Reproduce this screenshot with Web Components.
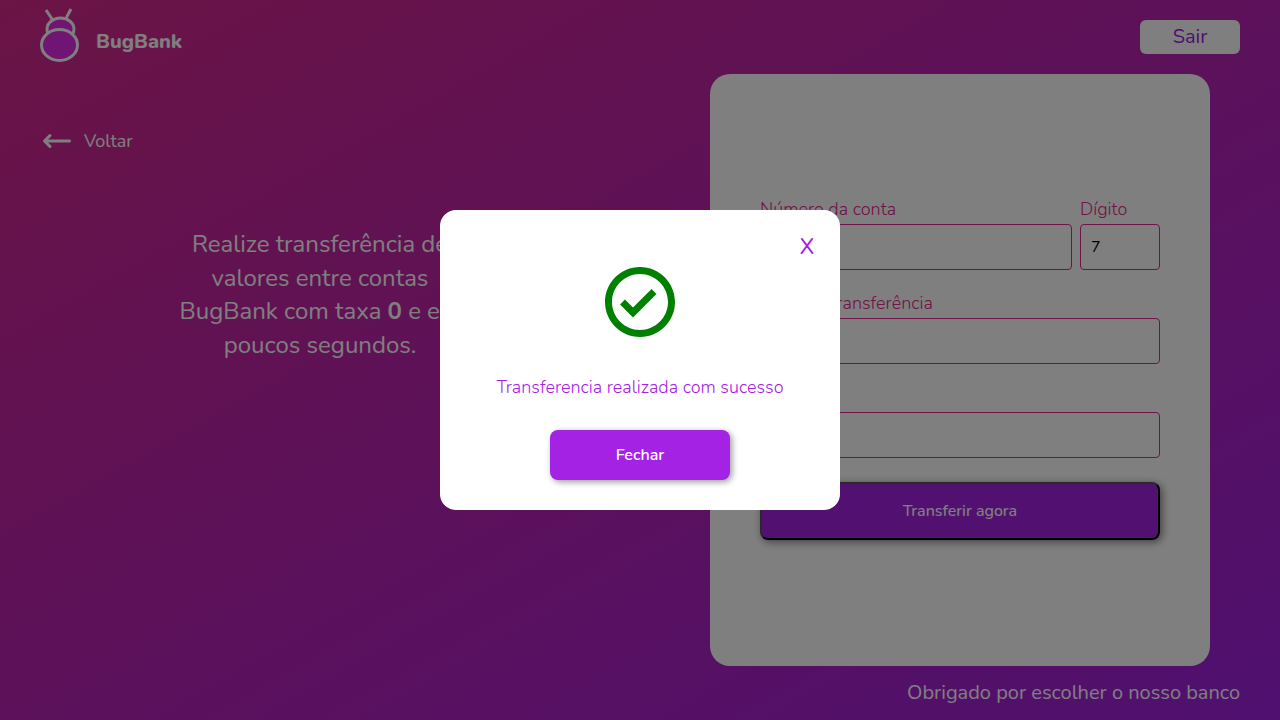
<!DOCTYPE html>
<html lang="pt-BR">
<head>
<meta charset="utf-8">
<meta name="viewport" content="width=device-width, initial-scale=1">
<title>BugBank</title>
<style>
  body { margin: 0; font-family: Nunito, Lato, sans-serif; }
</style>
</head>
<body>
<bug-page>
  <bug-header slot="header"></bug-header>
  <bug-intro slot="intro">Realize transferência de valores entre contas BugBank com taxa <b>0</b> e em poucos segundos.</bug-intro>
  <bug-transfer slot="form"></bug-transfer>
  <span slot="footer">Obrigado por escolher o nosso banco</span>
</bug-page>
<bug-modal>Transferencia realizada com sucesso</bug-modal>

<script>
const define = (name, html) => {
  const template = document.createElement('template');
  template.innerHTML = '<style>*{box-sizing:border-box}</style>' + html;
  customElements.define(name, class extends HTMLElement {
    constructor() {
      super();
      this.attachShadow({ mode: 'open' }).append(template.content.cloneNode(true));
    }
  });
};

define('bug-page', `
<style>
  :host { display: flex; flex-direction: column; min-height: 100vh; box-sizing: border-box; color: #fff;
    background: linear-gradient(to bottom right, #d6298c, #b822b4 50%, #9f20e0); }
  main { flex: 1; display: grid; grid-template-columns: 1fr 1fr; }
  footer { display: flex; justify-content: flex-end; height: 54px; padding: 12px 40px 0; box-sizing: border-box; font-size: 20px; line-height: 30px; }
</style>
<slot name="header"></slot>
<main><slot name="intro"></slot><slot name="form"></slot></main>
<footer><slot name="footer"></slot></footer>`);

define('bug-header', `
<style>
  :host { display: flex; justify-content: space-between; align-items: flex-start; height: 74px; padding: 0 40px; box-sizing: border-box; }
  .brand { display: flex; align-items: flex-end; gap: 16px; margin-top: 7px; color: #fff; text-decoration: none; font-size: 20px; font-weight: 800; line-height: 30px; }
  .brand svg { display: block; }
  .brand span { padding-bottom: 8px; }
  button { width: 100px; height: 34px; margin-top: 20px; padding: 0; border: 0; border-radius: 6px; background: #fff; color: #9c20e3;
    font: 400 20px/34px Nunito, Lato, sans-serif; }
</style>
<a class="brand" href="#">
  <svg width="40" height="58" viewBox="0 0 40 58" fill="#e02ae8" stroke="#fff" stroke-width="3" aria-hidden="true">
    <path d="M6 3l8 12M31 2l-7 13"/>
    <ellipse cx="20.5" cy="22" rx="13.5" ry="11"/>
    <ellipse cx="19.5" cy="38" rx="18" ry="15.5"/>
  </svg>
  <span>BugBank</span>
</a>
<button type="button">Sair</button>`);

define('bug-intro', `
<style>
  :host { display: flex; flex-direction: column; gap: 72px; padding: 52px 40px 0; }
  a { display: flex; align-items: center; gap: 8px; height: 30px; color: #fff; text-decoration: none; font-size: 18px; }
  p { width: 290px; margin: 0 auto; font-size: 24px; line-height: 1.4; text-align: center; }
</style>
<a href="#">
  <svg width="36" height="30" viewBox="0 0 36 30" fill="none" stroke="#fff" stroke-width="3" stroke-linecap="round" stroke-linejoin="round" aria-hidden="true"><path d="M29.500 15H5M10 9.500L4.500 15l5.500 5.500"/></svg>
  Voltar
</a>
<p><slot></slot></p>`);

define('bug-transfer', `
<style>
  :host { display: flex; padding: 0 70px; }
  form { flex: 1; display: flex; flex-direction: column; justify-content: center; gap: 20px; padding: 0 50px 4px; border-radius: 20px; background: #fff; }
  .row { display: grid; grid-template-columns: 1fr 80px; gap: 8px; }
  label { display: flex; flex-direction: column; gap: 2px; min-width: 0; color: #e1268e; font: 300 18px/26px Nunito, Lato, sans-serif; }
  input { width: 100%; height: 46px; padding: 0 10px; border: 1px solid #e1268e; border-radius: 4px; background: #fff; color: #000;
    font: 400 16px Nunito, Lato, sans-serif; }
  button { height: 58px; margin-top: 4px; border: 2px outset #000; border-radius: 8px; background: #a422e3; color: #fff;
    font: 500 16px Nunito, Lato, sans-serif; box-shadow: 2px 2px 8px rgba(0,0,0,.5); }
</style>
<form>
  <div class="row">
    <label>Número da conta<input type="text" name="account"></label>
    <label>Dígito<input type="text" name="digit" value="7"></label>
  </div>
  <label>Valor da transferência<input type="text" name="amount"></label>
  <label>Descrição<input type="text" name="description"></label>
  <button type="button">Transferir agora</button>
</form>`);

define('bug-modal', `
<style>
  :host { position: fixed; inset: 0; display: flex; align-items: center; justify-content: center; background: rgba(0,0,0,.5); }
  section { display: flex; flex-direction: column; align-items: center; width: 400px; max-width: 100%; padding: 24px 25px 30px; border-radius: 16px; background: #fff; color: #a422e3; }
  .close { align-self: flex-end; width: 16px; height: 26px; padding: 0; border: 0; background: none; color: inherit; font: 500 22px/26px Nunito, Lato, sans-serif; }
  svg { display: block; }
  p { margin: 29px 0; font-size: 18px; line-height: 28px; font-weight: 300; }
  .action { width: 180px; height: 50px; border: 0; border-radius: 8px; background: #a422e3; color: #fff; font: 600 16px Nunito, Lato, sans-serif; box-shadow: 2px 2px 6px rgba(0,0,0,.4); }
</style>
<section role="dialog" aria-modal="true">
  <button class="close" type="button" aria-label="Fechar janela">X</button>
  <svg width="84" height="84" viewBox="0 0 24 24" fill="green" aria-hidden="true"><path d="M12 2C6.480 2 2 6.480 2 12s4.480 10 10 10 10-4.480 10-10S17.520 2 12 2zm0 18c-4.410 0-8-3.590-8-8s3.590-8 8-8 8 3.590 8 8-3.590 8-8 8zm3.300-11.700L10 13.600l-2.300-2.300-1.400 1.400L10 16.400l6.700-6.700z"/></svg>
  <p><slot></slot></p>
  <button class="action" type="button">Fechar</button>
</section>`);
</script>
</body>
</html>
